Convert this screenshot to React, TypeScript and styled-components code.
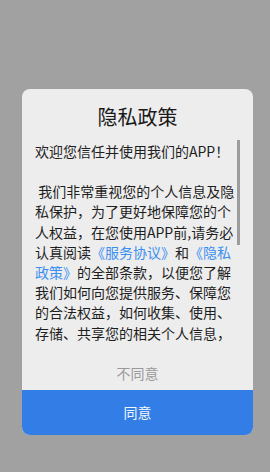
import React from 'react';
import styled, { createGlobalStyle } from 'styled-components';

const GlobalStyle = createGlobalStyle`
  html, body {
    margin: 0;
    padding: 0;
    background: #a1a1a1;
  }
  body {
    font-family: "Noto Sans CJK SC", "Noto Sans", sans-serif;
  }
`;

const Screen = styled.div`
  width: 270px;
  height: 472px;
  box-sizing: border-box;
  padding: 89px 17px 0 22px;
  background: #a1a1a1;
`;

const Dialog = styled.div`
  width: 231px;
  height: 346px;
  display: flex;
  flex-direction: column;
  border-radius: 8px;
  overflow: hidden;
  background: #ededed;
`;

const Title = styled.h2`
  margin: 0;
  padding-top: 16px;
  height: 24px;
  line-height: 24px;
  font-size: 20px;
  font-weight: 400;
  text-align: center;
  color: #1a1a1a;
`;

const Body = styled.div`
  position: relative;
  margin-top: 11px;
  height: 203px;
  padding: 0 14px 0 13px;
  overflow: hidden;
`;

const Paragraph = styled.p`
  margin: 0 0 20px;
  width: 200px;
  font-size: 14px;
  line-height: 20.2px;
  color: #1e1e1e;
  word-break: break-all;
  &:first-of-type {
    margin-top: 1px;
  }
`;

const Link = styled.span`
  color: #3a8ff0;
`;

const Thumb = styled.div`
  position: absolute;
  top: 0;
  right: 13px;
  width: 3px;
  height: 105px;
  background: #9c9c9c;
`;

const Actions = styled.div`
  margin-top: auto;
  display: flex;
  flex-direction: column;
`;

const ActionButton = styled.button<{ $primary?: boolean }>`
  border: none;
  margin: 0;
  padding: 0;
  width: 100%;
  font-family: inherit;
  font-size: 14px;
  cursor: pointer;
  height: ${(p) => (p.$primary ? '45px' : '34px')};
  line-height: ${(p) => (p.$primary ? '45px' : '34px')};
  background: ${(p) => (p.$primary ? '#337ee6' : 'transparent')};
  color: ${(p) => (p.$primary ? '#f2f6fd' : '#9a9a9a')};
`;

export default function App() {
  return (
    <>
      <GlobalStyle />
      <Screen>
        <Dialog>
          <Title>隐私政策</Title>
          <Body>
            <Paragraph>欢迎您信任并使用我们的APP！</Paragraph>
            <Paragraph>
              &nbsp;我们非常重视您的个人信息及隐私保护，为了更好地保障您的个人权益，在您使用APP前,请务必认真阅读
              <Link>《服务协议》</Link>和<Link>《隐私政策》</Link>
              的全部条款，以便您了解我们如何向您提供服务、保障您的合法权益，如何收集、使用、存储、共享您的相关个人信息，如何管理您的个人信息，以及您享有的相关权利。
            </Paragraph>
            <Thumb />
          </Body>
          <Actions>
            <ActionButton>不同意</ActionButton>
            <ActionButton $primary>同意</ActionButton>
          </Actions>
        </Dialog>
      </Screen>
    </>
  );
}
